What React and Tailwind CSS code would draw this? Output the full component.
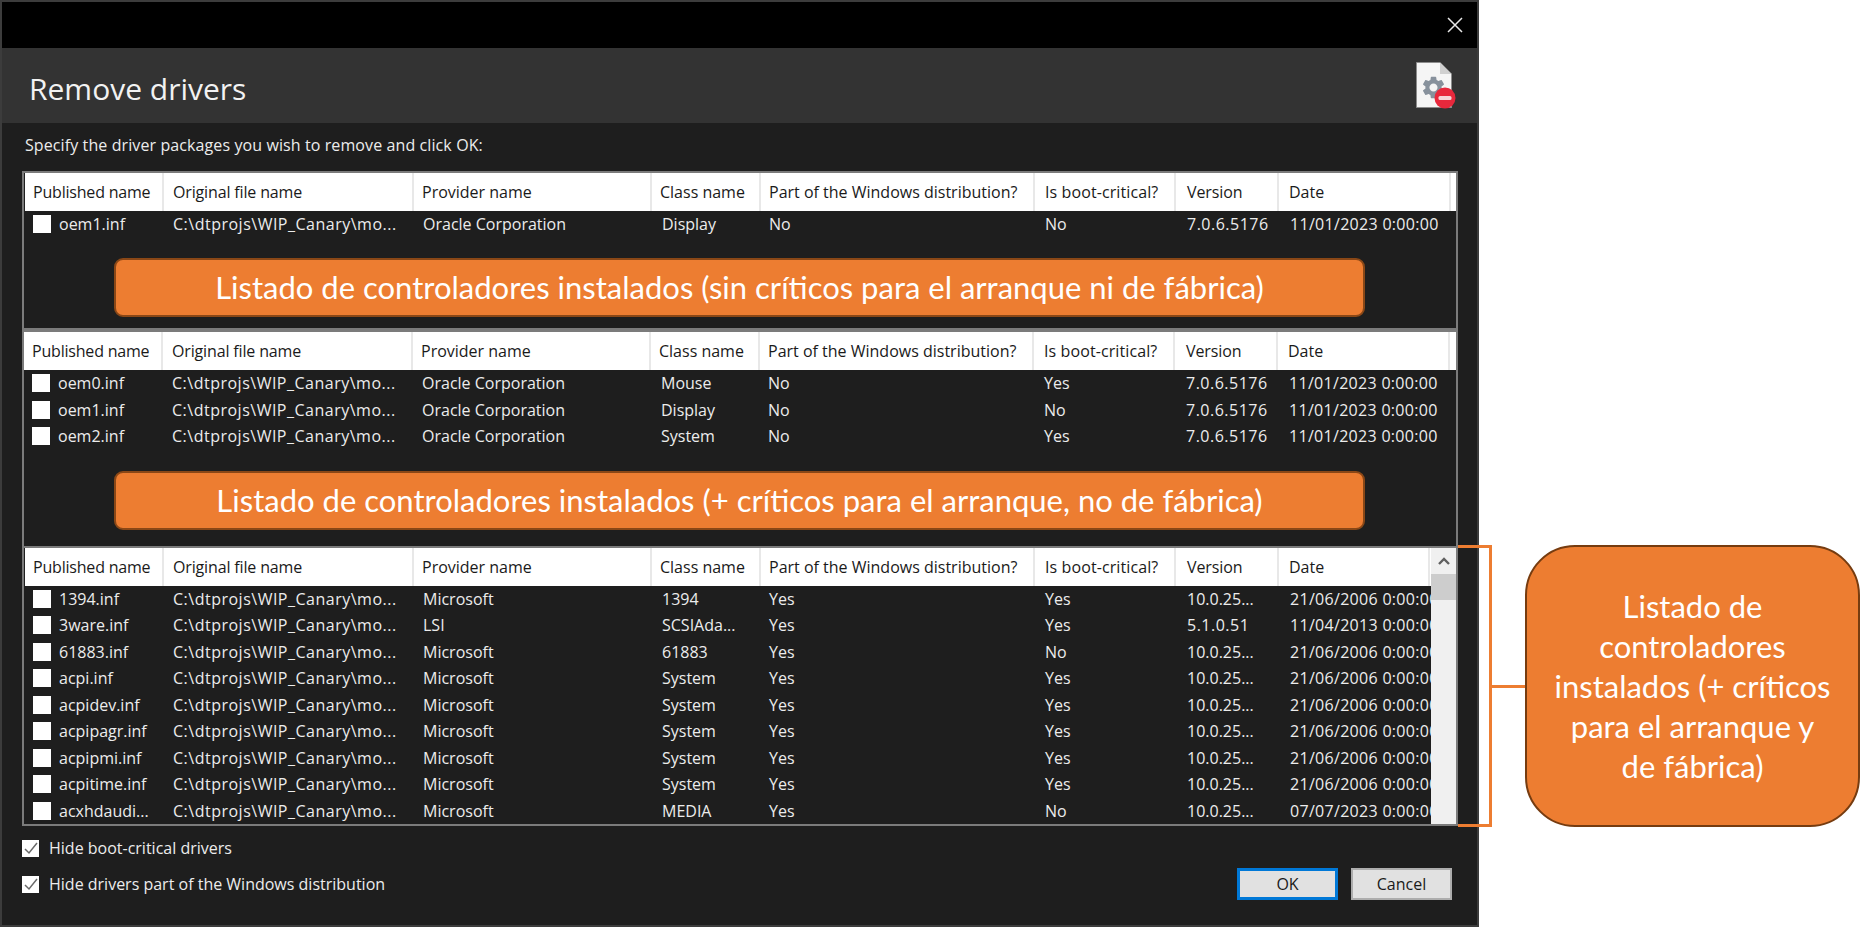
import React from "react";
import { MdSettings } from "react-icons/md";

const winFont = "font-['Open_Sans','Noto_Sans',sans-serif]";
const headers = [
  ["Published name", "pl-[8px] tracking-[-0.2px]"],
  ["Original file name", "pl-[9px] tracking-[-0.15px]"],
  ["Provider name", "pl-[8px]"],
  ["Class name", "pl-[8px]"],
  ["Part of the Windows distribution?", "pl-[8px]"],
  ["Is boot-critical?", "pl-[10px] tracking-[0.1px]"],
  ["Version", "pl-[11px] tracking-[-0.1px]"],
  ["Date", "pl-[10px]"],
];
const oraclePath = "C:\\dtprojs\\WIP_Canary\\mo...";

const oem1 = [["oem1.inf", "Oracle Corporation", "Display", "No", "No", "7.0.6.5176", "11/01/2023 0:00:00"]];
const oem3 = [
  ["oem0.inf", "Oracle Corporation", "Mouse", "No", "Yes", "7.0.6.5176", "11/01/2023 0:00:00"],
  ["oem1.inf", "Oracle Corporation", "Display", "No", "No", "7.0.6.5176", "11/01/2023 0:00:00"],
  ["oem2.inf", "Oracle Corporation", "System", "No", "Yes", "7.0.6.5176", "11/01/2023 0:00:00"],
];
const all = [
  ["1394.inf", "Microsoft", "1394", "Yes", "Yes", "10.0.25...", "21/06/2006 0:00:00"],
  ["3ware.inf", "LSI", "SCSIAda...", "Yes", "Yes", "5.1.0.51", "11/04/2013 0:00:00"],
  ["61883.inf", "Microsoft", "61883", "Yes", "No", "10.0.25...", "21/06/2006 0:00:00"],
  ["acpi.inf", "Microsoft", "System", "Yes", "Yes", "10.0.25...", "21/06/2006 0:00:00"],
  ["acpidev.inf", "Microsoft", "System", "Yes", "Yes", "10.0.25...", "21/06/2006 0:00:00"],
  ["acpipagr.inf", "Microsoft", "System", "Yes", "Yes", "10.0.25...", "21/06/2006 0:00:00"],
  ["acpipmi.inf", "Microsoft", "System", "Yes", "Yes", "10.0.25...", "21/06/2006 0:00:00"],
  ["acpitime.inf", "Microsoft", "System", "Yes", "Yes", "10.0.25...", "21/06/2006 0:00:00"],
  ["acxhdaudi...", "Microsoft", "MEDIA", "Yes", "No", "10.0.25...", "07/07/2023 0:00:00"],
];

const cols = "grid grid-cols-[139px_250px_238px_109px_274px_141px_103px_172px_5px]";
const colsScroll = "grid grid-cols-[139px_250px_238px_109px_274px_141px_103px_151px]";

function DriverTable({ rows, scroll, className = "" }) {
  const grid = scroll ? colsScroll : cols;
  return (
    <div className={`flex ${className}`}>
      <div className="flex-1 overflow-hidden">
        <div className={`${grid} h-[38px] bg-white text-[#1a1a1a] items-stretch`}>
          {headers.map(([h, cls]) => (
            <div key={h} className={`flex items-center border-r-2 border-[#e8e8e8] whitespace-nowrap ${cls}`}>{h}</div>
          ))}
        </div>
        {rows.map((r) => (
          <div key={r[0]} className={`${grid} h-[26.5px] items-center text-[#ececec] whitespace-nowrap`}>
            <div className="flex items-center gap-[8px] pl-[8px]">
              <span className="w-[18px] h-[18px] bg-white shrink-0" />
              {r[0]}
            </div>
            <div className="pl-[9px] tracking-[0.5px]">{oraclePath}</div>
            <div className="pl-[9px]">{r[1]}</div>
            <div className="pl-[10px]">{r[2]}</div>
            <div className="pl-[8px]">{r[3]}</div>
            <div className="pl-[10px]">{r[4]}</div>
            <div className={`pl-[11px] ${r[5].endsWith("...") ? "tracking-normal" : "tracking-[0.5px]"}`}>{r[5]}</div>
            <div className="pl-[11px] tracking-[0.3px]">{r[6]}</div>
          </div>
        ))}
      </div>
      {scroll && (
        <div className="w-[25px] bg-[#f0f0f0] flex flex-col items-center">
          <div className="h-[26px] flex items-center justify-center">
            <svg width="14" height="10" viewBox="0 0 14 10" fill="none" stroke="#606060" strokeWidth="2.4"><path d="M2 8 L7 3 L12 8" /></svg>
          </div>
          <div className="w-full h-[26px] bg-[#cdcdcd]" />
        </div>
      )}
    </div>
  );
}

function Banner({ children, className }) {
  return (
    <div className={`ml-[89px] mr-[91px] h-[59px] flex items-center justify-center bg-[#ed7d31] border-2 border-[#8a4716] rounded-[9px] text-white text-[31px] whitespace-nowrap font-['Lato','Open_Sans',sans-serif] ${className}`}>
      {children}
    </div>
  );
}

function Checked({ children }) {
  return (
    <label className="flex items-center gap-[10px] h-[18px] text-[#ececec]">
      <span className="w-[17px] h-[17px] bg-white flex items-center justify-center shrink-0">
        <svg width="15" height="15" viewBox="0 0 15 15" fill="none" stroke="#6a6a6a" strokeWidth="1.5"><path d="M2 8 L6 12 L14 2" /></svg>
      </span>
      {children}
    </label>
  );
}

export default function App() {
  return (
    <div className="w-[1861px] h-[927px] bg-white flex overflow-hidden">
      {/* dialog */}
      <div className={`w-[1479px] h-[927px] shrink-0 bg-[#1e1e1e] border-2 border-[#3c3c3c] flex flex-col text-[16px] ${winFont}`}>
        <div className="h-[46px] shrink-0 bg-black flex items-center justify-end pr-[14px]">
          <svg width="16" height="16" viewBox="0 0 16 16" stroke="#e8e8e8" strokeWidth="1.5"><path d="M1 1 L15 15 M15 1 L1 15" /></svg>
        </div>
        <div className="h-[75px] shrink-0 bg-[#333333] flex items-center justify-between pl-[27px] pr-[21px]">
          <h1 className="text-[30px] text-[#f2f2f2] font-normal pt-[6px]">Remove drivers</h1>
          <div className="relative w-[40px] h-[48px]">
            <svg width="36" height="46" viewBox="0 0 36 46" className="absolute left-0 top-0">
              <path d="M0.5 0.5 H24 L35.5 12 V45.5 H0.5 Z" fill="#f5f5f5" stroke="#8c8c8c" />
              <path d="M24 0.5 V12 H35.5 Z" fill="#d0d0d0" />
            </svg>
            <MdSettings className="absolute left-[4px] top-[12px] text-[#87919c]" size={27} />
            <svg width="22" height="22" viewBox="0 0 22 22" className="absolute left-[18px] top-[25px]">
              <circle cx="11" cy="11" r="10.5" fill="#e8283c" />
              <rect x="4.5" y="9" width="13" height="4" rx="1.5" fill="#f6d5d8" />
            </svg>
          </div>
        </div>
        <div className="flex-1 flex flex-col pl-[20px] pr-[19px]">
          <p className="h-[48px] flex items-center pl-[3px] pb-[5px] text-[#ececec] tracking-[0.1px]">Specify the driver packages you wish to remove and click OK:</p>
          {/* tables with the banners between them */}
          <div className="h-[655px] border-2 border-[#7b7b7b] bg-[#1e1e1e] pl-[1px]">
            <DriverTable rows={oem1} />
            <Banner className="mt-[20.5px]">Listado de controladores instalados (sin críticos para el arranque ni de fábrica)</Banner>
            <div className="mt-[11px] h-[4px] -ml-[1px] bg-[#7b7b7b]" />
            <DriverTable rows={oem3} className="-ml-[1px]" />
            <Banner className="mt-[21px]">Listado de controladores instalados (+ críticos para el arranque, no de fábrica)</Banner>
            <div className="mt-[16px] h-[2px] -ml-[1px] bg-[#7b7b7b]" />
            <DriverTable rows={all} scroll />
          </div>
          <div className="flex justify-between items-start pr-[6px]">
            <div className="flex flex-col gap-[18px] pt-[13px]">
              <Checked>Hide boot-critical drivers</Checked>
              <Checked>Hide drivers part of the Windows distribution</Checked>
            </div>
            <div className="flex gap-[13px] pt-[42px] text-[#1a1a1a]">
              <button className="w-[101px] h-[32px] bg-[#e1e1e1] border-[3px] border-[#0078d7]">OK</button>
              <button className="w-[101px] h-[32px] bg-[#e1e1e1] border-2 border-[#adadad]">Cancel</button>
            </div>
          </div>
        </div>
      </div>

      {/* callout */}
      <div className="relative mt-[545px] h-[282px] flex-1 flex items-center pl-[13px]">
        <div className="absolute -left-[21px] top-0 w-[34px] h-[282px] border-y-[3px] border-r-[3px] border-[#ed7d31]" />
        <div className="w-[33px] h-[3px] bg-[#ed7d31]" />
        <div className="w-[335px] h-[282px] bg-[#ed7d31] border-2 border-[#763c10] rounded-[50px] flex items-center justify-center text-center text-white text-[31px] leading-[40px] font-['Lato','Open_Sans',sans-serif]">
          <p>Listado de<br />controladores<br />instalados (+ críticos<br />para el arranque y<br />de fábrica)</p>
        </div>
      </div>
    </div>
  );
}
